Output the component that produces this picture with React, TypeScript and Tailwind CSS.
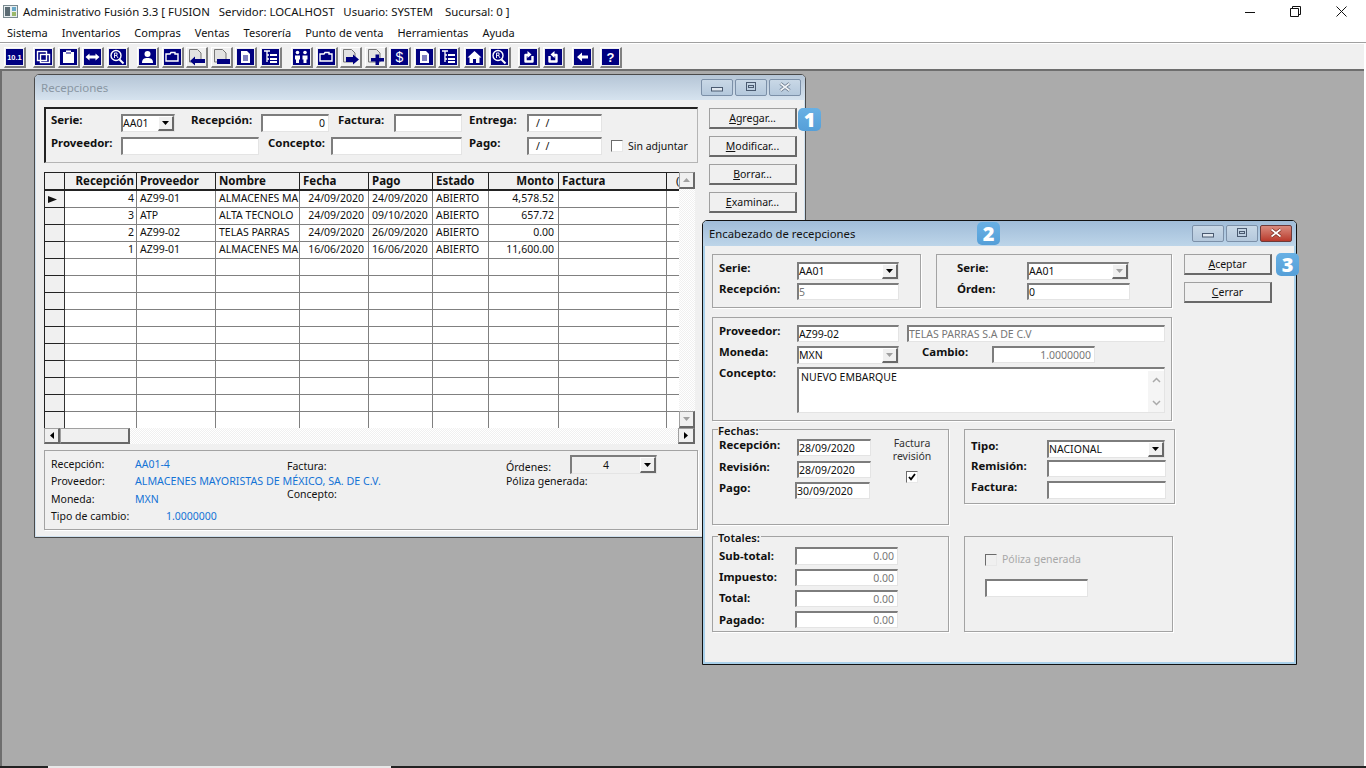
import React from "react";

const raised = "border border-t-[#a0a0a0] border-l-[#a0a0a0] border-r-2 border-b-2 border-r-[#696969] border-b-[#696969]";

function L({ c = "", children }: { c?: string; children: React.ReactNode }) {
  return <span className={"block shrink-0 text-[11.4px] font-bold leading-[11px] whitespace-nowrap text-[#111] " + c}>{children}</span>;
}

function Field({ c = "", right = false, muted = false, children }: { c?: string; right?: boolean; muted?: boolean; children?: React.ReactNode }) {
  return (
    <div
      className={
        "shrink-0 flex items-center overflow-hidden whitespace-nowrap bg-white border-t-2 border-l-2 border-t-[#7d7d7d] border-l-[#7d7d7d] border-r border-b border-r-[#e4e4e4] border-b-[#e4e4e4] leading-[13px] " +
        (right ? "justify-end pr-[3px] " : "") +
        (muted ? "text-[#777] " : "text-[#111] ") +
        c
      }
    >
      {children}
    </div>
  );
}

function Arrow({ up = false, gray = false }: { up?: boolean; gray?: boolean }) {
  return (
    <svg width="7" height="4" viewBox="0 0 7 4" className={up ? "rotate-180" : ""}>
      <path d="M0 0h7L3.5 4z" fill={gray ? "#a0a0a0" : "#000"} />
    </svg>
  );
}

function Combo({ c = "", gray = false, center = false, children }: { c?: string; gray?: boolean; center?: boolean; children?: React.ReactNode }) {
  return (
    <div className={"shrink-0 flex items-center bg-white border-t-2 border-l-2 border-t-[#7d7d7d] border-l-[#7d7d7d] border-r border-b border-r-[#e4e4e4] border-b-[#e4e4e4] leading-[13px] " + c}>
      <span className={"flex-1 text-[#111] whitespace-nowrap " + (center ? "text-center" : "")}>{children}</span>
      <span className="flex h-full w-[16px] items-center justify-center bg-[#f0f0f0] border-t border-l border-t-white border-l-white border-r-2 border-b-2 border-r-[#696969] border-b-[#696969]">
        <Arrow gray={gray} />
      </span>
    </div>
  );
}

function Check({ checked = false, gray = false }: { checked?: boolean; gray?: boolean }) {
  return (
    <span className={"block h-[12px] w-[12px] shrink-0 border-t border-l border-t-[#6b6b6b] border-l-[#6b6b6b] border-r border-b border-r-[#e8e8e8] border-b-[#e8e8e8] " + (gray ? "bg-[#f0f0f0]" : "bg-white")}>
      {checked && (
        <svg width="10" height="10" viewBox="0 0 10 10">
          <path d="M2 5l2 2.4L8 2" fill="none" stroke="#000" strokeWidth="1.8" />
        </svg>
      )}
    </span>
  );
}

function Btn({ c = "", children }: { c?: string; children: React.ReactNode }) {
  return (
    <div className={"flex h-[21px] w-[88px] items-center justify-center bg-[#f0f0f0] text-[#111] leading-none " + raised + " " + c}>
      <span>{children}</span>
    </div>
  );
}

function Group({ c = "", legend, children }: { c?: string; legend?: string; children?: React.ReactNode }) {
  return (
    <div className={"relative shrink-0 border border-[#a3a3a3] shadow-[1px_1px_0_#fff] " + c}>
      {legend && <span className="absolute left-[5px] top-[-6px] bg-[#f0f0f0] pr-[1px] text-[11.2px] leading-[14px] font-semibold text-[#111]">{legend}</span>}
      {children}
    </div>
  );
}

function Badge({ c = "", children }: { c?: string; children: React.ReactNode }) {
  return (
    <div className={"absolute flex h-[23px] w-[23px] items-center justify-center rounded-[5px] bg-gradient-to-b from-[#68b0e4] to-[#559fd8] text-[20px] font-extrabold leading-none text-white font-['Open_Sans',sans-serif] " + c}>
      {children}
    </div>
  );
}

function WinBtn({ kind, red = false }: { kind: "min" | "max" | "x"; red?: boolean }) {
  const fill = red ? "#fff" : "#dfe7ef";
  return (
    <div className={"flex h-[17px] w-[32px] items-center justify-center rounded-[2px] border " + (red ? "border-[#6d3a3a] bg-gradient-to-b from-[#d98a7e] to-[#b8392c]" : "border-[#7c90a8] bg-gradient-to-b from-[#c9d8e6] to-[#b4c8dc]")}>
      <svg width="14" height="11" viewBox="0 0 14 11">
        {kind === "min" && <rect x="1.5" y="5.5" width="11" height="3.5" fill={fill} stroke="#4a5a70" />}
        {kind === "max" && (
          <g fill="none" stroke="#4a5a70">
            <rect x="2.5" y="0.5" width="9" height="8" />
            <rect x="4.5" y="3.5" width="5" height="2" />
          </g>
        )}
        {kind === "x" && (
          <g>
            <path d="M2.5 1.5l9 7M11.500 1.500l-9 7" stroke={red ? "#7a2a20" : "#66758a"} strokeWidth="3.4" />
            <path d="M2.5 1.5l9 7M11.500 1.500l-9 7" stroke={red ? "#fff" : "#eef2f6"} strokeWidth="1.6" />
          </g>
        )}
      </svg>
    </div>
  );
}

/* ------ toolbar ------ */
function Tool({ children, c = "" }: { children: React.ReactNode; c?: string }) {
  return (
    <div className={"h-[21px] w-[22px] shrink-0 border border-t-white border-l-white border-r-2 border-b-2 border-r-[#808080] border-b-[#808080] bg-[#f0f0f0] " + c}>
      <svg width="19" height="18" viewBox="0 0 19 18" className="block">{children}</svg>
    </div>
  );
}
const Navy = () => <rect x="1" y="1" width="17" height="16" fill="#000080" />;
const W = { fill: "none", stroke: "#fff", strokeWidth: 1.4 };
const DocGray = () => <path d="M2.5 1.5h8l3.500 3.500v9h-11.500z" fill="#e2e2e2" stroke="#777" />;

const Lens = () => (
  <g>
    <Navy />
    <circle cx="8" cy="7.5" r="5" {...W} />
    <path d="M11.5 11.5l4 4" stroke="#fff" strokeWidth="2" />
    <path d="M6.5 10V5h2.5v2.4H6.5M8.4 7.4l1.6 2.6" fill="none" stroke="#fff" strokeWidth=".9" />
  </g>
);
const DocNavy = () => (
  <g>
    <Navy />
    <path d="M5 3h6l3 3v9H5z" fill="#fff" />
    <path d="M7 8h5M7 10h5M7 12h5" stroke="#000080" />
  </g>
);
const Tree = () => (
  <g>
    <Navy />
    <path d="M3 3h6M6 3v11M6 7h2M6 11h2" stroke="#fff" strokeWidth="1.3" fill="none" />
    <path d="M9 6h7v2H9zM9 10h7v2H9zM9 13h7v2H9z" fill="#fff" />
  </g>
);
const Folder = () => (
  <g>
    <Navy />
    <path d="M3 6h4l1-1.5h4V6h3v7H3z" {...W} />
  </g>
);

function Toolbar() {
  return (
    <div className="flex h-[25px] shrink-0 items-start bg-[#f0f0f0] pl-[4px] pt-[3px] mr-[2px]">
      <Tool>
        <Navy />
        <text x="9.5" y="12" textAnchor="middle" fontSize="7.5" fontWeight="700" fill="#fff" fontFamily="Liberation Sans, sans-serif">10.1</text>
      </Tool>
      <div className="ml-[7px] flex gap-[2.5px]">
        <Tool>
          <Navy />
          <rect x="3.5" y="3.5" width="9" height="9" {...W} />
          <rect x="6.5" y="6.5" width="9" height="8" {...W} />
        </Tool>
        <Tool>
          <Navy />
          <path d="M4 4h3V2.5h5V4h3v11H4z" fill="#fff" />
          <path d="M7 5h5" stroke="#000080" />
        </Tool>
        <Tool>
          <Navy />
          <path d="M2.5 9l4-3.5v2h6v-2l4 3.5-4 3.5v-2h-6v2z" fill="#fff" />
        </Tool>
        <Tool><Lens /></Tool>
      </div>
      <div className="ml-[8.5px] flex gap-[2.5px]">
        <Tool>
          <Navy />
          <circle cx="9.5" cy="6" r="3" fill="#fff" />
          <path d="M4 15c0-4 2-5 5.5-5s5.5 1 5.5 5z" fill="#fff" />
        </Tool>
        <Tool><Folder /></Tool>
        <Tool>
          <DocGray />
          <path d="M3 13l5-4.500v2.500h10v4H8v2.500z" fill="#000080" />
        </Tool>
        <Tool>
          <DocGray />
          <path d="M5 11h13v5H5z" fill="#000080" />
        </Tool>
        <Tool><DocNavy /></Tool>
        <Tool><Tree /></Tool>
      </div>
      <div className="ml-[9.5px] flex gap-[2.5px]">
        <Tool>
          <Navy />
          <circle cx="5.5" cy="4.5" r="1.8" fill="#fff" />
          <circle cx="13" cy="4.5" r="1.8" fill="#fff" />
          <path d="M3 7.5h5v4h-1v3.5H4v-3.5H3zM10.5 7.5h5v4h-1v3.5h-3v-3.500h-1z" fill="#fff" />
        </Tool>
        <Tool><Folder /></Tool>
        <Tool>
          <DocGray />
          <path d="M5 9h7V6.500l6 5-6 5V14H5z" fill="#000080" />
        </Tool>
        <Tool>
          <DocGray />
          <path d="M9.500 6.500h3.500v3.500h5v3.500h-5v3.500H9.500v-3.500H5V10h4.500z" fill="#000080" />
        </Tool>
        <Tool>
          <Navy />
          <text x="9.500" y="14" textAnchor="middle" fontSize="14" fill="#fff" fontFamily="Liberation Sans, sans-serif">$</text>
        </Tool>
        <Tool><DocNavy /></Tool>
        <Tool><Tree /></Tool>
      </div>
      <div className="ml-[4px] flex gap-[2.5px]">
        <Tool>
          <Navy />
          <path d="M9.500 3l7 6.500h-2V15h-3.500v-4h-3v4H4.500V9.500h-2z" fill="#fff" />
        </Tool>
        <Tool><Lens /></Tool>
      </div>
      <div className="ml-[7.5px] flex gap-[2.5px]">
        <Tool>
          <Navy />
          <path d="M9 7H6.500v6.500h7V8" fill="none" stroke="#fff" strokeWidth="2.400" strokeLinejoin="round" />
          <path d="M8.500 3l4 3.500-4 3.500z" fill="#fff" />
        </Tool>
        <Tool>
          <Navy />
          <path d="M10 7h2.500v6.500h-7V8" fill="none" stroke="#fff" strokeWidth="2.400" strokeLinejoin="round" />
          <path d="M10.500 3l-4 3.500 4 3.500z" fill="#fff" />
        </Tool>
      </div>
      <div className="ml-[7.5px]">
        <Tool>
          <Navy />
          <path d="M4 9l5-4.500V7.500h6v3H9v3z" fill="#fff" />
        </Tool>
      </div>
      <div className="ml-[6px]">
        <Tool>
          <Navy />
          <text x="9.500" y="14" textAnchor="middle" fontSize="13" fontWeight="700" fill="#fff" fontFamily="Liberation Sans, sans-serif">?</text>
        </Tool>
      </div>
    </div>
  );
}

/* ------ data grid ------ */
const cols = "grid grid-cols-[20px_72px_79px_84px_69px_64px_56px_70px_108px_12px]";
const rows = [
  ["4", "AZ99-01", "ALMACENES MA", "24/09/2020", "24/09/2020", "ABIERTO", "4,578.52", ""],
  ["3", "ATP", "ALTA TECNOLO", "24/09/2020", "09/10/2020", "ABIERTO", "657.72", ""],
  ["2", "AZ99-02", "TELAS PARRAS", "24/09/2020", "26/09/2020", "ABIERTO", "0.00", ""],
  ["1", "AZ99-01", "ALMACENES MA", "16/06/2020", "16/06/2020", "ABIERTO", "11,600.00", ""],
  ...Array.from({ length: 10 }, () => ["", "", "", "", "", "", "", ""]),
];
const hCell = "h-[19px] overflow-hidden whitespace-nowrap border-r border-r-[#222] border-t border-t-[#222] border-b-2 border-b-[#222] bg-[#f0f0f0] text-[11.5px] font-bold leading-[15px] text-[#111]";

function DataGrid() {
  const aligns = ["justify-end pr-[2px]", "pl-[3px]", "pl-[3px]", "justify-end pr-[4px]", "pl-[3px]", "pl-[3px]", "justify-end pr-[4px]", "pl-[3px]"];
  return (
    <div className="w-[651px] shrink-0 bg-white">
      <div className="flex h-[256px]">
        <div className={"w-[635px] shrink-0 overflow-hidden content-start border-l border-l-[#222] " + cols}>
          <div className={hCell} />
          <div className={hCell + " text-right pr-[2px]"}>Recepción</div>
          <div className={hCell + " pl-[3px]"}>Proveedor</div>
          <div className={hCell + " pl-[3px]"}>Nombre</div>
          <div className={hCell + " pl-[3px]"}>Fecha</div>
          <div className={hCell + " pl-[3px]"}>Pago</div>
          <div className={hCell + " pl-[3px]"}>Estado</div>
          <div className={hCell + " text-right pr-[4px]"}>Monto</div>
          <div className={hCell + " pl-[3px]"}>Factura</div>
          <div className={hCell + " pl-[9px] border-r-0 font-normal"}>(</div>
          {rows.map((r, i) => (
            <React.Fragment key={i}>
              <div className={"flex h-[17px] items-center justify-center bg-[#f0f0f0] border-r border-r-[#333] " + (i < 13 ? "border-b border-b-[#222]" : "")}>
                {i === 0 && (
                  <svg width="9" height="7" viewBox="0 0 9 7" className="mr-[4px]">
                    <path d="M0 0l9 3.500L0 7z" fill="#111" />
                  </svg>
                )}
              </div>
              {r.map((v, j) => (
                <div key={j} className={"flex h-[17px] items-center overflow-hidden whitespace-nowrap text-[#111] border-r border-r-[#808080] " + (i < 13 ? "border-b border-b-[#808080] " : "") + aligns[j]}>
                  {v}
                </div>
              ))}
              <div className={i < 13 ? "border-b border-b-[#808080]" : ""} />
            </React.Fragment>
          ))}
        </div>
        <div className="flex w-[16px] flex-col justify-between bg-[repeating-conic-gradient(#f0f0f0_0_25%,#fff_0_50%)] bg-[length:2px_2px]">
          <div className={"flex h-[17px] items-center justify-center bg-[#f0f0f0] " + raised}><Arrow up gray /></div>
          <div className={"flex h-[17px] items-center justify-center bg-[#f0f0f0] " + raised}><Arrow gray /></div>
        </div>
      </div>
      <div className="flex h-[16px] bg-[repeating-conic-gradient(#f0f0f0_0_25%,#fff_0_50%)] bg-[length:2px_2px]">
        <div className={"flex w-[16px] items-center justify-center bg-[#f0f0f0] " + raised}>
          <svg width="4" height="7" viewBox="0 0 4 7"><path d="M4 0v7L0 3.500z" fill="#000" /></svg>
        </div>
        <div className={"w-[70px] bg-[#f0f0f0] " + raised} />
        <div className="flex-1" />
        <div className={"flex w-[17px] items-center justify-center bg-[#f0f0f0] " + raised}>
          <svg width="4" height="7" viewBox="0 0 4 7"><path d="M0 0v7l4-3.500z" fill="#000" /></svg>
        </div>
      </div>
    </div>
  );
}

/* ------ windows ------ */
function Recepciones() {
  return (
    <section className="absolute left-[32px] top-[3px] flex h-[464px] w-[772px] flex-col rounded-t-[5px] border border-[#4a4a4a] bg-[#f0f0f0]">
      <header className="flex h-[25px] shrink-0 items-start justify-between rounded-t-[4px] bg-gradient-to-b from-[#b5c5d6] to-[#d6e3ef] pl-[6px] pr-[4px] pt-[4px]">
        <span className="mt-[2px] text-[11.5px] leading-[14px] text-[#8a97a3]">Recepciones</span>
        <div className="flex gap-[2px]">
          <WinBtn kind="min" />
          <WinBtn kind="max" />
          <WinBtn kind="x" />
        </div>
      </header>
      <div className="flex flex-1 border-x border-b border-[#cfe0ee] pl-[8px] pt-[7px]">
        <div className="w-[654px] shrink-0">
          <div className="h-[56px] border-t-2 border-l-2 border-t-[#222] border-l-[#222] border-r border-b border-r-[#b4b4b4] border-b-[#b4b4b4] pl-[5px]">
            <div className="mt-[5px] flex items-start">
              <L c="w-[70px]">Serie:</L>
              <Combo c="h-[18px] w-[54px]">AA01</Combo>
              <L c="ml-[16px] w-[70px]">Recepción:</L>
              <Field c="h-[18px] w-[68px]" right>0</Field>
              <L c="ml-[9px] w-[56px]">Factura:</L>
              <Field c="h-[18px] w-[68px]" />
              <L c="ml-[7px] w-[58px]">Entrega:</L>
              <Field c="h-[18px] w-[75px] pl-[7px]">/{"\u00a0\u00a0"}/</Field>
            </div>
            <div className="mt-[5px] flex items-start">
              <L c="w-[70px]">Proveedor:</L>
              <Field c="h-[18px] w-[138px]" />
              <L c="ml-[9px] w-[63px]">Concepto:</L>
              <Field c="h-[18px] w-[131px]" />
              <L c="ml-[7px] w-[58px]">Pago:</L>
              <Field c="h-[18px] w-[75px] pl-[7px]">/{"\u00a0\u00a0"}/</Field>
              <span className="ml-[9px] mt-[3px]"><Check /></span>
              <span className="ml-[5px] mt-[3px] leading-[13px] whitespace-nowrap text-[#111]">Sin adjuntar</span>
            </div>
          </div>
          <div className="mt-[9px]"><DataGrid /></div>
          <div className="mt-[6px] flex h-[80px] border border-[#a3a3a3] pl-[6px] shadow-[1px_1px_0_#fff]">
            <div className="w-[236px] shrink-0 pt-[5px] leading-[17.3px] whitespace-nowrap">
              <div className="flex"><span className="w-[84px] shrink-0 text-[#111]">Recepción:</span><span className="text-[#1473d6]">AA01-4</span></div>
              <div className="flex"><span className="w-[84px] shrink-0 text-[#111]">Proveedor:</span><span className="text-[10.7px] text-[#1473d6]">ALMACENES MAYORISTAS DE MÉXICO, SA. DE C.V.</span></div>
              <div className="flex"><span className="w-[84px] shrink-0 text-[#111]">Moneda:</span><span className="text-[#1473d6]">MXN</span></div>
              <div className="flex"><span className="w-[115px] shrink-0 text-[#111]">Tipo de cambio:</span><span className="text-[#1473d6]">1.0000000</span></div>
            </div>
            <div className="w-[219px] shrink-0 pt-[9px] leading-[13px] text-[#111]">
              <div>Factura:</div>
              <div className="mt-[15px]">Concepto:</div>
            </div>
            <div className="pt-[4px] leading-[13px] text-[#111]">
              <div className="flex items-start">
                <span className="mt-[6px] w-[64px]">Órdenes:</span>
                <Combo c="h-[19px] w-[87px] !bg-[#f0f0f0]" center>4</Combo>
              </div>
              <div className="mt-[1px]">Póliza generada:</div>
            </div>
          </div>
        </div>
        <div className="relative ml-[11px] flex w-[88px] shrink-0 flex-col gap-[7px] pt-[1px]">
          <Btn c="border-[#222] border-t-[#333] border-l-[#333] border-r-[#222] border-b-[#222]"><u>A</u>gregar...</Btn>
          <Btn><u>M</u>odificar...</Btn>
          <Btn><u>B</u>orrar...</Btn>
          <Btn><u>E</u>xaminar...</Btn>
          <Badge c="left-[89px] top-[1px]">1</Badge>
        </div>
      </div>
    </section>
  );
}

function Encabezado() {
  return (
    <section className="absolute left-[700px] top-[149px] flex h-[445px] w-[595px] flex-col rounded-t-[5px] border border-[#111] bg-[#f0f0f0]">
      <header className="relative flex h-[25px] shrink-0 items-start justify-between rounded-t-[4px] bg-gradient-to-b from-[#a0bcd8] to-[#bdd5e9] pl-[6px] pr-[4px] pt-[4px]">
        <span className="mt-[2px] text-[11.3px] leading-[14px] text-[#111]">Encabezado de recepciones</span>
        <Badge c="left-[274px] top-[1px]">2</Badge>
        <div className="flex gap-[2px]">
          <WinBtn kind="min" />
          <WinBtn kind="max" />
          <WinBtn kind="x" red />
        </div>
      </header>
      <div className="flex-1 border-x-2 border-b-2 border-[#a9d0ea] pl-[7px] pt-[8px]">
        <div className="flex items-start">
          <Group c="h-[54px] w-[209px] pl-[6px] pt-[7px]">
            <div className="flex">
              <L c="w-[78px]">Serie:</L>
              <Combo c="h-[18px] w-[102px]">AA01</Combo>
            </div>
            <div className="mt-[3px] flex">
              <L c="w-[78px]">Recepción:</L>
              <Field c="h-[17px] w-[102px]" muted>5</Field>
            </div>
          </Group>
          <Group c="ml-[15px] h-[54px] w-[236px] pl-[20px] pt-[7px]">
            <div className="flex">
              <L c="w-[70px]">Serie:</L>
              <Combo c="h-[18px] w-[102px]" gray>AA01</Combo>
            </div>
            <div className="mt-[3px] flex">
              <L c="w-[70px]">Órden:</L>
              <Field c="h-[17px] w-[103px]">0</Field>
            </div>
          </Group>
          <div className="relative ml-[12px] flex w-[88px] flex-col gap-[7px]">
            <Btn><u>A</u>ceptar</Btn>
            <Btn><u>C</u>errar</Btn>
            <Badge c="left-[92px] top-[-1px]">3</Badge>
          </div>
        </div>
        <Group c="mt-[9px] h-[104px] w-[460px] pl-[6px] pt-[7px]">
          <div className="flex">
            <L c="w-[78px]">Proveedor:</L>
            <Field c="h-[17px] w-[102px]">AZ99-02</Field>
            <Field c="ml-[8px] h-[17px] w-[258px]" muted>TELAS PARRAS S.A DE C.V</Field>
          </div>
          <div className="mt-[4px] flex">
            <L c="w-[78px]">Moneda:</L>
            <Combo c="h-[18px] w-[102px]" gray>MXN</Combo>
            <L c="ml-[23px] w-[70px]">Cambio:</L>
            <Field c="h-[17px] w-[103px]" right muted>1.0000000</Field>
          </div>
          <div className="mt-[3px] flex">
            <L c="w-[78px]">Concepto:</L>
            <div className="flex h-[46px] w-[368px] shrink-0 justify-between bg-white border-t-2 border-l-2 border-t-[#7d7d7d] border-l-[#7d7d7d] border-r border-b border-r-[#e4e4e4] border-b-[#e4e4e4] pl-[2px] pt-[2px] leading-[13px] text-[#111]">
              <span>NUEVO EMBARQUE</span>
              <div className="flex w-[16px] flex-col items-center justify-between bg-[#f5f5f5] py-[6px]">
                <svg width="9" height="6" viewBox="0 0 9 6"><path d="M1 5l3.500-3.500L8 5" fill="none" stroke="#aaa" strokeWidth="1.500" /></svg>
                <svg width="9" height="6" viewBox="0 0 9 6"><path d="M1 1l3.500 3.500L8 1" fill="none" stroke="#aaa" strokeWidth="1.500" /></svg>
              </div>
            </div>
          </div>
        </Group>
        <div className="mt-[8px] flex items-start">
          <div className="w-[237px] shrink-0">
            <Group c="flex h-[96px] w-[237px]" legend="Fechas:">
              <div className="w-[158px] shrink-0 pl-[6px] pt-[9px]">
                <div className="flex">
                  <L c="w-[78px]">Recepción:</L>
                  <Field c="h-[17px] w-[74px]">28/09/2020</Field>
                </div>
                <div className="mt-[5px] flex">
                  <L c="w-[78px]">Revisión:</L>
                  <Field c="h-[17px] w-[74px]">28/09/2020</Field>
                </div>
                <div className="mt-[4px] flex">
                  <L c="w-[76px]">Pago:</L>
                  <Field c="h-[17px] w-[75px]">30/09/2020</Field>
                </div>
              </div>
              <div className="ml-[6px] flex w-[70px] flex-col items-center pt-[7px] text-center leading-[13px] text-[#333]">
                <span>Factura</span>
                <span>revisión</span>
                <span className="mt-[8px]"><Check checked /></span>
              </div>
            </Group>
            <Group c="mt-[11px] h-[96px] w-[237px] pl-[6px] pt-[10px]" legend="Totales:">
              <div className="flex">
                <L c="mt-[3px] w-[76px]">Sub-total:</L>
                <Field c="h-[18px] w-[103px]" right muted>0.00</Field>
              </div>
              <div className="mt-[4px] flex">
                <L c="mt-[2px] w-[76px]">Impuesto:</L>
                <Field c="h-[17px] w-[103px]" right muted>0.00</Field>
              </div>
              <div className="mt-[4px] flex">
                <L c="mt-[2px] w-[76px]">Total:</L>
                <Field c="h-[17px] w-[103px]" right muted>0.00</Field>
              </div>
              <div className="mt-[4px] flex">
                <L c="mt-[3px] w-[76px]">Pagado:</L>
                <Field c="h-[17px] w-[103px]" right muted>0.00</Field>
              </div>
            </Group>
          </div>
          <div className="ml-[15px]">
            <Group c="h-[75px] w-[211px] pl-[6px] pt-[10px]">
              <div className="flex">
                <L c="w-[76px]">Tipo:</L>
                <Combo c="h-[18px] w-[118px]">NACIONAL</Combo>
              </div>
              <div className="mt-[2px] flex">
                <L c="w-[76px]">Remisión:</L>
                <Field c="h-[17px] w-[119px]" />
              </div>
              <div className="mt-[4px] flex">
                <L c="w-[76px]">Factura:</L>
                <Field c="h-[18px] w-[119px]" />
              </div>
            </Group>
            <Group c="mt-[32px] h-[96px] w-[209px] pl-[20px] pt-[16px]">
              <div className="flex items-center">
                <Check gray />
                <span className="ml-[5px] leading-[13px] text-[#a8a8a8]">Póliza generada</span>
              </div>
              <Field c="mt-[13px] h-[18px] w-[103px]" />
            </Group>
          </div>
        </div>
      </div>
    </section>
  );
}

export default function App() {
  const menu = ["Sistema", "Inventarios", "Compras", "Ventas", "Tesorería", "Punto de venta", "Herramientas", "Ayuda"];
  return (
    <div className="flex h-[768px] w-[1366px] flex-col overflow-hidden bg-white font-['Noto_Sans',sans-serif] text-[10.5px]">
      <div className="flex h-[23px] shrink-0 items-center pl-[3px]">
        <svg width="15" height="13" viewBox="0 0 15 13" className="shrink-0">
          <rect x="0.500" y="0.500" width="14" height="12" fill="#e8eef0" stroke="#7a8a90" />
          <rect x="2" y="2" width="5" height="9" fill="#5b6b73" />
          <rect x="9" y="2" width="4" height="4" fill="#68a8c8" />
          <rect x="9" y="7" width="4" height="4" fill="#9ab86a" />
        </svg>
        <span className="ml-[5px] whitespace-pre text-[11.4px] leading-none text-[#111]">Administrativo Fusión 3.3 [ FUSION   Servidor: LOCALHOST   Usuario: SYSTEM    Sucursal: 0 ]</span>
        <div className="ml-auto flex items-center">
          <svg width="10" height="10" viewBox="0 0 10 10" className="mr-[35px]"><path d="M0 5.500h10" stroke="#111" /></svg>
          <svg width="11" height="11" viewBox="0 0 11 11" className="mr-[35px]"><path d="M.5 2.500h8v8h-8zM2.500 2.500v-2h8v8h-2" fill="none" stroke="#111" /></svg>
          <svg width="11" height="11" viewBox="0 0 11 11" className="mr-[19px]"><path d="M.5.5l10 10M10.500.5l-10 10" stroke="#111" /></svg>
        </div>
      </div>
      <nav className="flex h-[19px] shrink-0 items-center gap-[14px] pl-[7px] text-[11px] leading-none text-[#111]">
        {menu.map((m) => <span key={m}>{m}</span>)}
      </nav>
      <div className="h-[2px] shrink-0 border-t border-t-[#a0a0a0] bg-white" />
      <Toolbar />
      <main className="relative mr-[2px] flex-1 border-t-2 border-l-2 border-t-[#6e6e6e] border-l-[#6e6e6e] bg-[#ababab]">
        <Recepciones />
        <Encabezado />
      </main>
      <div className="flex h-[2px] shrink-0 bg-[#222]">
        <div className="ml-[48px] w-[343px] bg-[#e8e8e8]" />
      </div>
    </div>
  );
}
